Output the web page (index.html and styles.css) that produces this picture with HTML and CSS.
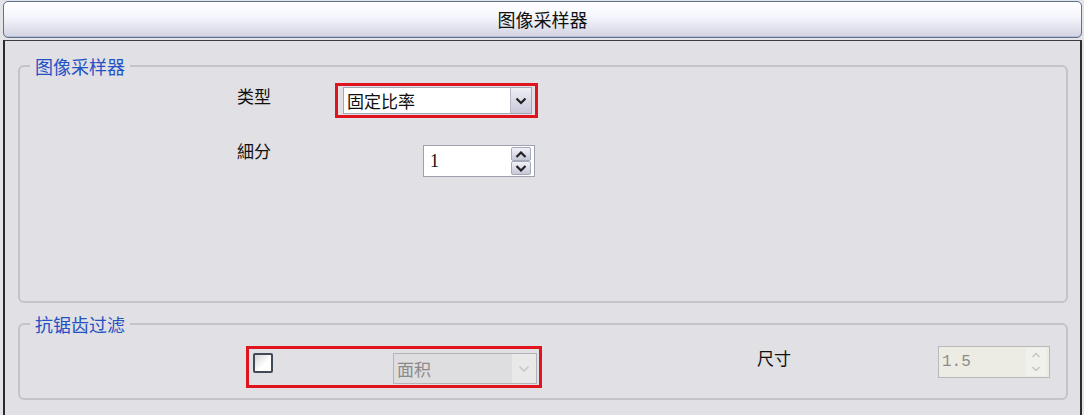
FILE: index.html
```html
<!DOCTYPE html>
<html lang="zh-CN">
<head>
    <meta charset="UTF-8">
    <title>图像采样器</title>
    <link rel="stylesheet" href="styles.css">
</head>
<body>
    <div class="window">
        <div class="titlebar">图像采样器</div>
        <div class="panel">
            <fieldset class="group">
                <legend>图像采样器</legend>
                <div class="group-body sampler">
                    <div class="row">
                        <span class="label label-type">类型</span>
                        <div class="mark">
                            <div class="select">
                                <span class="select-text">固定比率</span>
                                <span class="select-btn">
                                    <svg width="12" height="8" viewBox="0 0 12 8"><path d="M1.5 1.5 L6 6 L10.5 1.5" fill="none" stroke="#222" stroke-width="2.2"/></svg>
                                </span>
                            </div>
                        </div>
                    </div>
                    <div class="row row-sub">
                        <span class="label label-sub">細分</span>
                        <div class="spin">
                            <span class="spin-value serif">1</span>
                            <span class="spin-btns">
                                <span class="spin-btn"><svg width="12" height="7" viewBox="0 0 12 7"><path d="M1.5 6 L6 1.5 L10.5 6" fill="none" stroke="#222" stroke-width="2.2"/></svg></span>
                                <span class="spin-btn"><svg width="12" height="7" viewBox="0 0 12 7"><path d="M1.5 1 L6 5.5 L10.5 1" fill="none" stroke="#222" stroke-width="2.2"/></svg></span>
                            </span>
                        </div>
                    </div>
                </div>
            </fieldset>

            <fieldset class="group group-aa">
                <legend>抗锯齿过滤</legend>
                <div class="group-body filter">
                    <div class="mark mark-aa">
                        <span class="check"></span>
                        <div class="select select-off">
                            <span class="select-text">面积</span>
                            <span class="select-btn">
                                <svg width="12" height="8" viewBox="0 0 12 8"><path d="M1.5 1.5 L6 6 L10.5 1.5" fill="none" stroke="#c9c9c9" stroke-width="1.6"/></svg>
                            </span>
                        </div>
                    </div>
                    <span class="label label-size">尺寸</span>
                    <div class="spin spin-off">
                        <span class="spin-value mono">1.5</span>
                        <span class="spin-btns">
                            <span class="spin-btn"><svg width="10" height="6" viewBox="0 0 10 6"><path d="M1.5 5 L5 1.5 L8.5 5" fill="none" stroke="#c4c4c4" stroke-width="1.4"/></svg></span>
                            <span class="spin-btn"><svg width="10" height="6" viewBox="0 0 10 6"><path d="M1.5 1 L5 4.5 L8.5 1" fill="none" stroke="#c4c4c4" stroke-width="1.4"/></svg></span>
                        </span>
                    </div>
                </div>
            </fieldset>
        </div>
    </div>
</body>
</html>
```

FILE: styles.css
```css
body {
    margin: 0;
    background: #e4e3e8;
    font-family: "Noto Sans CJK SC", "Noto Sans", sans-serif;
    font-size: 17px;
    color: #111;
}
.window {
    padding: 1px 2px 0 3px;
}
.titlebar {
    height: 35px;
    line-height: 35px;
    font-size: 18px;
    text-align: center;
    border: 1px solid #5f7291;
    border-radius: 5px;
    background: linear-gradient(#ffffff 0%, #f6f7fd 40%, #d2d2e2 100%);
    box-shadow: inset 0 -1px 0 #b9bccf;
}
.panel {
    margin-top: 2px;
    height: 376px;
    border-top: 1px solid #3a3d44;
    border-left: 2px solid #2b2b2f;
    border-right: 2px solid #2b2b2f;
    background: #e1e0e5;
    padding-top: 15px;
    box-sizing: border-box;
}
.group {
    margin: 0 12px 0 13px;
    padding: 0;
    border: 2px solid #c3c3c8;
    border-radius: 6px;
    min-width: 0;
}
.group legend {
    margin-left: 10px;
    padding: 0 5px;
    font-size: 18px;
    line-height: 20px;
    color: #2452c4;
}
.group-aa {
    margin-top: 11px;
}
.group-body {
    box-sizing: border-box;
}
.sampler {
    height: 225px;
    padding: 7px 0 0 217px;
}
.filter {
    height: 64px;
    padding: 12px 0 0 226px;
    display: flex;
    align-items: flex-start;
}
.row {
    display: flex;
    align-items: flex-start;
}
.row-sub {
    margin-top: 27px;
}
.label {
    line-height: 20px;
}
.label-type {
    width: 98px;
    padding-top: 3px;
}
.label-sub {
    width: 186px;
    line-height: 12px;
}
.label-size {
    margin-left: 215px;
    padding-top: 2px;
    width: 181px;
}
.mark {
    border: 3px solid #e0141e;
    padding: 1px 3px 1px 5px;
    display: flex;
}
.mark-aa {
    padding: 4px 2px 1px 4px;
    align-items: flex-start;
    width: 284px;
}
.select {
    width: 189px;
    height: 27px;
    border: 1px solid #a3a6b3;
    background: #fff;
    box-sizing: border-box;
    display: flex;
    align-items: center;
    justify-content: space-between;
}
.select-text {
    padding-left: 3px;
    line-height: 20px;
}
.select-btn {
    width: 21px;
    height: 25px;
    box-sizing: border-box;
    border-left: 1px solid #b7b9c9;
    background: linear-gradient(#eeeef5, #c9c9da);
    display: flex;
    align-items: center;
    justify-content: center;
}
.select-off {
    width: 144px;
    height: 31px;
    margin-left: 120px;
    background: #dedde0;
    border-color: #b4b4b8;
}
.select-off .select-text {
    color: #8a8a8a;
}
.select-off .select-btn {
    width: 24px;
    height: 29px;
    border-left: none;
    background: #e9e9ea;
}
.check {
    width: 20px;
    height: 20px;
    box-sizing: border-box;
    border: 2px solid #424a57;
    border-radius: 2px;
    background: linear-gradient(135deg, #d6d4d8, #ffffff 60%);
}
.spin {
    width: 112px;
    height: 32px;
    border: 1px solid #9ea1ad;
    background: #fff;
    box-sizing: border-box;
    display: flex;
    align-items: center;
    justify-content: space-between;
    padding-right: 3px;
}
.spin-value {
    padding-left: 6px;
    font-size: 18px;
}
.serif {
    font-family: "Liberation Serif", serif;
}
.mono {
    font-family: "Liberation Mono", monospace;
    font-size: 16px;
    color: #8c8c8c;
    padding-left: 3px;
}
.spin-btns {
    display: flex;
    flex-direction: column;
}
.spin-btn {
    width: 20px;
    height: 14px;
    box-sizing: border-box;
    border: 1px solid #a5a8b8;
    border-radius: 2px;
    background: linear-gradient(#f1f1f7, #c6c7d8);
    display: flex;
    align-items: center;
    justify-content: center;
}
.spin-off {
    background: #ecece4;
    border-color: #b9b9b9;
}
.spin-off .spin-btn {
    border: none;
    background: #f0f0ec;
}
```
